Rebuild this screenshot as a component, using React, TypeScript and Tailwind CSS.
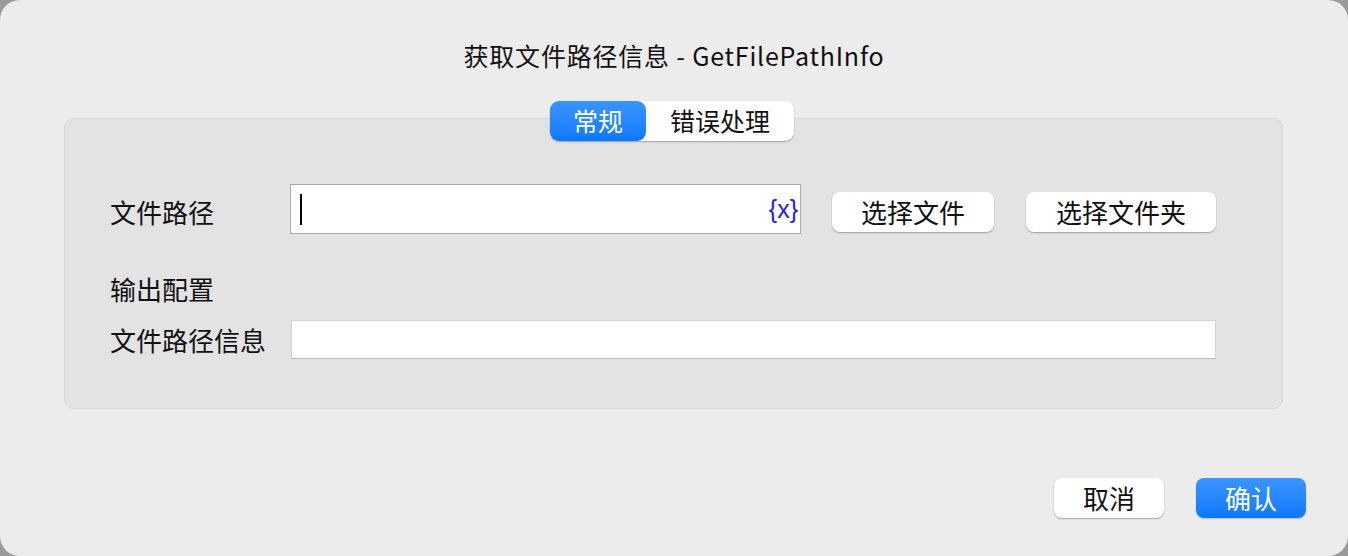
export default function App() {
  const font = { fontFamily: '"Noto Sans CJK SC", "Liberation Sans", sans-serif' };

  return (
    <div className="w-[1348px] h-[556px] bg-[#9a9a9a]" style={font}>
      <div className="w-full h-full rounded-[20px] bg-[#ececec] flex flex-col text-[#111]">
        {/* Title */}
        <div className="h-[114px] pt-[36px] flex justify-center">
          <h1 className="text-[25px] leading-[38px] tracking-[0.8px]">
            获取文件路径信息 - GetFilePathInfo
          </h1>
        </div>

        {/* Tabs + panel */}
        <div className="flex flex-col items-center px-[64px] pr-[65px]">
          <div className="relative z-10 flex h-[40px] mr-[3px] rounded-[9px] bg-white shadow-[0_1px_1.5px_rgba(0,0,0,0.3)] text-[25px] -mt-[13px]">
            <div className="w-[96px] rounded-[9px] bg-gradient-to-b from-[#3a95ff] to-[#0a78ff] text-white flex items-center justify-center">
              常规
            </div>
            <div className="w-[148px] flex items-center justify-center">错误处理</div>
          </div>

          <div className="w-full h-[291px] -mt-[23px] rounded-[10px] bg-[#e3e3e3] border border-[#d7d7d7] pl-[45px] pt-[65px]">
            {/* Row 1 */}
            <div className="flex items-start h-[50px]">
              <div className="w-[180px] h-[50px] flex items-center text-[26px] pt-[4px]">文件路径</div>
              <div className="w-[511px] h-[50px] bg-white border border-[#a9a9a9] flex items-center pl-[9px] pr-[2px]">
                <div className="w-[2px] h-[31px] bg-black" />
                <div className="flex-1" />
                <span className="text-[#1c1cf5] text-[25px] leading-[30px]" style={{ fontFamily: '"Liberation Sans", sans-serif' }}>
                  {'{x}'}
                </span>
              </div>
              <button className="ml-[31px] mt-[8px] w-[162px] h-[40px] rounded-[8px] bg-white shadow-[0_1px_1.5px_rgba(0,0,0,0.3)] text-[26px] leading-[40px]">
                选择文件
              </button>
              <button className="ml-[32px] mt-[8px] w-[190px] h-[40px] rounded-[8px] bg-white shadow-[0_1px_1.5px_rgba(0,0,0,0.3)] text-[26px] leading-[40px]">
                选择文件夹
              </button>
            </div>

            {/* Output config */}
            <div className="mt-[37px] text-[26px] leading-[36px]">输出配置</div>

            {/* Row 2 */}
            <div className="flex items-center mt-[13px]">
              <div className="w-[181px] text-[26px]">文件路径信息</div>
              <div className="w-[925px] h-[39px] bg-white border-t border-x border-[#d3d3d3] border-b border-b-[#b5b5b5]" />
            </div>
          </div>
        </div>

        {/* Footer */}
        <div className="flex justify-end gap-[32px] pr-[42px] mt-[69px]">
          <button className="w-[110px] h-[40px] rounded-[8px] bg-white shadow-[0_1px_1.5px_rgba(0,0,0,0.3)] text-[26px] leading-[40px]">
            取消
          </button>
          <button className="w-[110px] h-[40px] rounded-[8px] bg-gradient-to-b from-[#3a95ff] to-[#0a78ff] text-white shadow-[0_1px_1.5px_rgba(0,0,0,0.2)] text-[26px] leading-[40px]">
            确认
          </button>
        </div>
      </div>
    </div>
  );
}
